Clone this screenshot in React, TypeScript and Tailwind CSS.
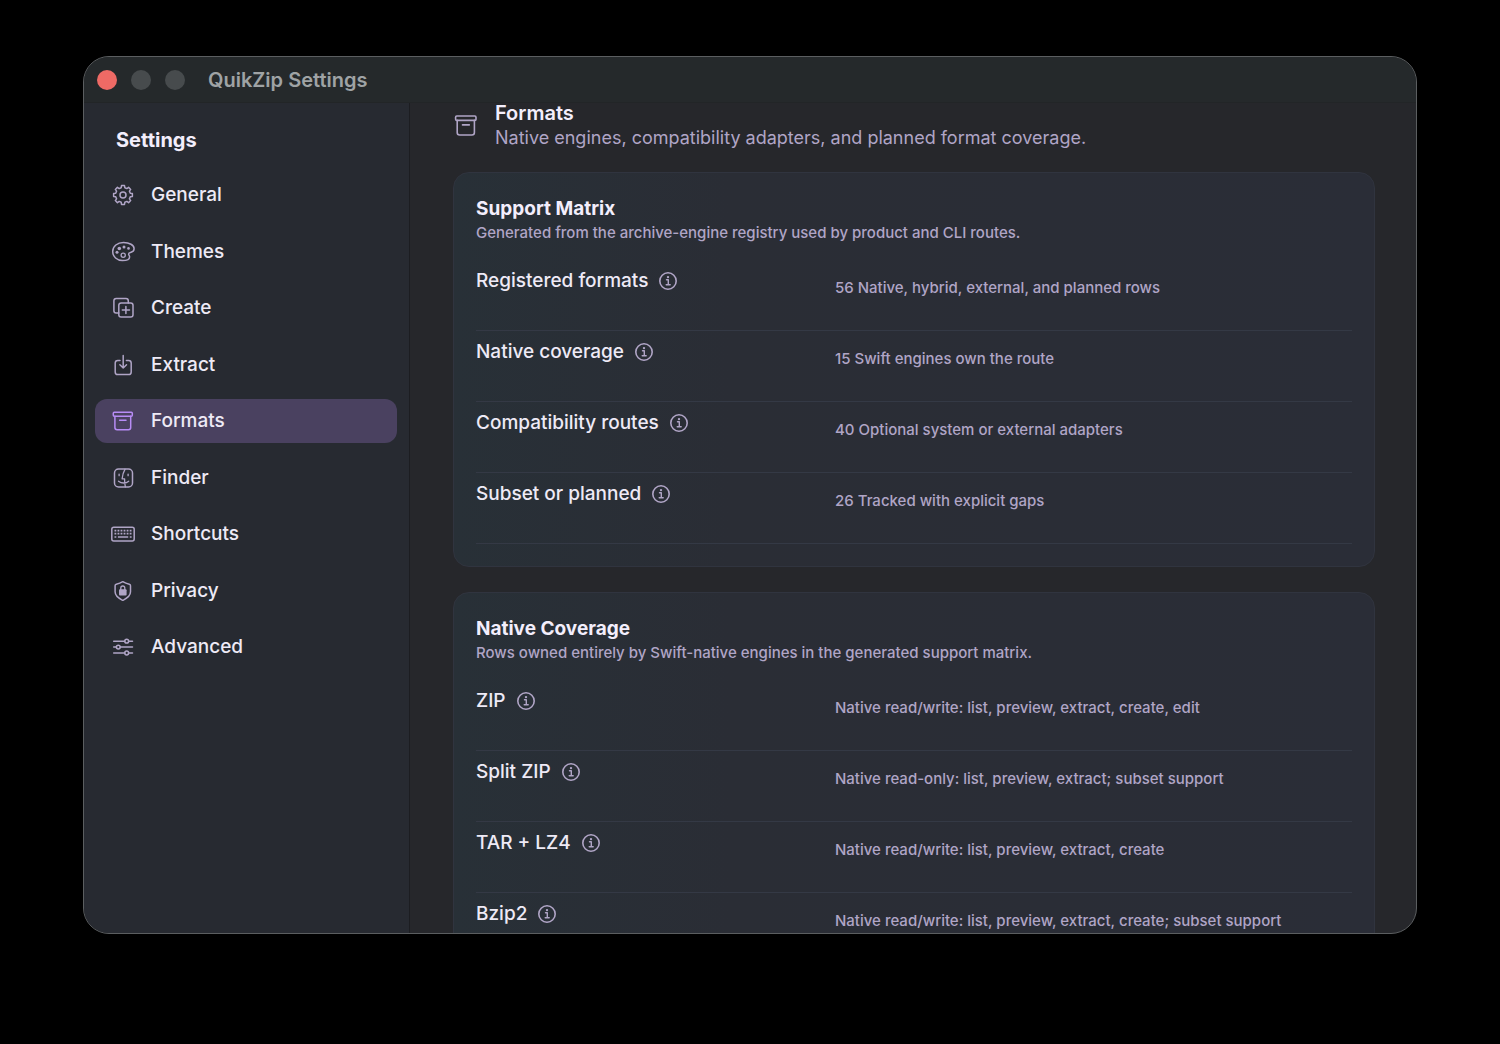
import type { ReactNode } from "react";

type Row = { label: string; value: string };

const supportRows: Row[] = [
  { label: "Registered formats", value: "56 Native, hybrid, external, and planned rows" },
  { label: "Native coverage", value: "15 Swift engines own the route" },
  { label: "Compatibility routes", value: "40 Optional system or external adapters" },
  { label: "Subset or planned", value: "26 Tracked with explicit gaps" },
];

const nativeRows: Row[] = [
  { label: "ZIP", value: "Native read/write: list, preview, extract, create, edit" },
  { label: "Split ZIP", value: "Native read-only: list, preview, extract; subset support" },
  { label: "TAR + LZ4", value: "Native read/write: list, preview, extract, create" },
  { label: "Bzip2", value: "Native read/write: list, preview, extract, create; subset support" },
];

// Eight-tooth cog outline around (12, 12)
function gearPath() {
  const points: string[] = [];
  for (let tooth = 0; tooth < 8; tooth++) {
    const corners = [
      [-14, 7.5],
      [-9, 9.5],
      [9, 9.5],
      [14, 7.5],
    ];
    for (const [offset, radius] of corners) {
      const angle = ((tooth * 45 + offset) * Math.PI) / 180;
      points.push(`${(12 + radius * Math.sin(angle)).toFixed(2)} ${(12 - radius * Math.cos(angle)).toFixed(2)}`);
    }
  }
  return `M${points.join("L")}Z`;
}

function Icon({ children }: { children: ReactNode }) {
  return (
    <svg
      aria-hidden="true"
      viewBox="0 0 24 24"
      className="size-6 shrink-0"
      fill="none"
      stroke="currentColor"
      strokeWidth="1.5"
      strokeLinecap="round"
      strokeLinejoin="round"
    >
      {children}
    </svg>
  );
}

const navItems: { label: string; icon: ReactNode }[] = [
  {
    label: "General",
    icon: (
      <Icon>
        <path d={gearPath()} />
        <circle cx="12" cy="12" r="3" />
      </Icon>
    ),
  },
  {
    label: "Themes",
    icon: (
      <Icon>
        <path d="M12.5 2.5C6.400 2.500 1.700 6.200 1.700 11.500c0 5.200 4.300 9 9.800 9 4.200 0 7.100-1.500 7.100-3.600 0-1.300-1-1.700-1-2.800 0-1.200 1.100-1.500 2.500-1.900 1.700-.5 3-1.500 3-3.500 0-3.600-4.700-6.200-10.600-6.200Z" />
        <circle cx="12.2" cy="15.3" r="2.100" strokeWidth="1.3" />
        <g fill="currentColor" stroke="none">
          <circle cx="6" cy="12.300" r="1.500" />
          <circle cx="8.300" cy="8.500" r="1.800" />
          <circle cx="13" cy="6.900" r="1.500" />
          <circle cx="17.500" cy="8.400" r="1.300" />
        </g>
      </Icon>
    ),
  },
  {
    label: "Create",
    icon: (
      <Icon>
        <path d="M7.800 17H5.200a2.300 2.300 0 0 1-2.300-2.300V4.900a2.300 2.300 0 0 1 2.300-2.300h9.800a2.300 2.300 0 0 1 2.300 2.300v2" />
        <rect x="7.800" y="6.900" width="14.200" height="14.200" rx="2.300" />
        <path d="M14.900 10.400v7.200M11.300 14h7.200" />
      </Icon>
    ),
  },
  {
    label: "Extract",
    icon: (
      <Icon>
        <path d="M9 7.500H6.800a2.600 2.600 0 0 0-2.600 2.600v8.900a2.600 2.600 0 0 0 2.600 2.600h10.800a2.600 2.600 0 0 0 2.600-2.600v-8.900a2.600 2.600 0 0 0-2.600-2.600h-2.200M12.200 2.600v12.300M8.900 11.800l3.300 3.200 3.300-3.200" />
      </Icon>
    ),
  },
  {
    label: "Formats",
    icon: (
      <Icon>
        <rect x="2.300" y="3.300" width="19" height="4" rx="1" />
        <path d="M3.900 7.300v11.200a2.200 2.200 0 0 0 2.200 2.200h11.400a2.200 2.200 0 0 0 2.200-2.200V7.300M8.600 11.200h6.400" />
      </Icon>
    ),
  },
  {
    label: "Finder",
    icon: (
      <Icon>
        <rect x="3.500" y="3" width="18" height="18" rx="4" />
        <path strokeWidth="1.300" d="M14.100 3.200c-1.800 3-2.700 6-3 9.600h2.500c-.1 2.700.1 5.400.8 8M7.500 15.200c3 2.400 7.500 2.400 10.200 0M8.100 8.100v1.600M17.100 8.100v1.600" />
      </Icon>
    ),
  },
  {
    label: "Shortcuts",
    icon: (
      <Icon>
        <rect x="0.800" y="5.200" width="22.400" height="13.800" rx="2" />
        <path
          strokeLinecap="butt"
          strokeWidth="1.800"
          strokeDasharray="1.800 1.240"
          d="M3.500 8.700h17.200M3.500 11.700h17.200"
        />
        <path strokeLinecap="butt" strokeWidth="1.700" d="M3.500 15h1.800M6.900 15h10.300M18.800 15h1.800" />
      </Icon>
    ),
  },
  {
    label: "Privacy",
    icon: (
      <Icon>
        <path d="M11.800 2.700c-2 1.300-4.300 2.100-6.500 2.500-.8.200-1.200.7-1.200 1.500v6.100c0 4.500 3.600 6.500 7.100 8.300q.6.300 1.200 0c3.500-1.800 7.100-3.800 7.100-8.300V6.700c0-.8-.4-1.300-1.200-1.500-2.200-.4-4.500-1.200-6.500-2.500Z" />
        <rect x="8" y="10.300" width="7.600" height="6.200" rx="1" fill="currentColor" stroke="none" />
        <path strokeWidth="1.300" d="M9.800 11V9a2 2 0 0 1 4 0v2" />
      </Icon>
    ),
  },
  {
    label: "Advanced",
    icon: (
      <Icon>
        <path d="M2.700 6.200h11M17.700 6.200h3.800M2.700 12.100h2.600M9.300 12.100h12.200M2.700 18h11M17.700 18h3.800" />
        <circle cx="15.700" cy="6.200" r="1.900" />
        <circle cx="7.300" cy="12.100" r="1.900" />
        <circle cx="15.700" cy="18" r="1.900" />
      </Icon>
    ),
  },
];

function InfoButton({ label }: { label: string }) {
  return (
    <button type="button" aria-label={`About ${label}`} className="text-[#b0a5c6]">
      <svg
        aria-hidden="true"
        viewBox="0 0 20 20"
        className="size-5"
        fill="none"
        stroke="currentColor"
        strokeWidth="1.6"
        strokeLinecap="round"
        strokeLinejoin="round"
      >
        <circle cx="10" cy="10" r="8.200" />
        <path strokeWidth="1.400" d="M8.500 8.800h1.800v4.900M8.200 13.800h4" />
        <circle cx="10" cy="6.100" r="1.200" fill="currentColor" stroke="none" />
      </svg>
    </button>
  );
}

function FormatCard({ title, description, rows }: { title: string; description: string; rows: Row[] }) {
  return (
    <section className="rounded-2xl border border-[#30343f] bg-linear-to-r from-[#283037] via-[#2a2d35] via-30% to-[#2a2d37] px-[22px] pt-6 pb-[22px]">
      <h2 className="text-[19px] leading-6 font-bold text-[#f3eefc]">{title}</h2>
      <p className="text-[15px] leading-6 font-medium text-[#b0a5c6]">{description}</p>
      <dl className="mt-[15px]">
        {rows.map((row) => (
          <div key={row.label} className="grid h-[71px] grid-cols-[359px_1fr] border-b border-[#343945]">
            <dt className="flex items-center gap-[10px] self-start pt-[9px] text-[19px] leading-6 font-medium text-[#eeeaf6]">
              {row.label}
              <InfoButton label={row.label} />
            </dt>
            <dd className="pt-[18px] text-[15px] leading-5 font-medium text-[#b0a5c6]">{row.value}</dd>
          </div>
        ))}
      </dl>
    </section>
  );
}

export default function App() {
  return (
    <div className="h-screen bg-black px-[83px] pt-14 pb-[110px] font-['Inter',sans-serif]">
      <div className="flex h-full flex-col overflow-hidden rounded-[26px] border border-[#5b5e60] bg-[#26272b]">
        {/* Title bar */}
        <header className="flex h-[46px] shrink-0 items-center border-b border-[#222527] bg-[#25292b] pl-[13px]">
          <div className="flex gap-[14px]">
            <button type="button" aria-label="Close" className="size-5 rounded-full bg-[#ee6a65]" />
            <button type="button" aria-label="Minimize" className="size-5 rounded-full bg-[#474b4d]" />
            <button type="button" aria-label="Zoom" className="size-5 rounded-full bg-[#474b4d]" />
          </div>
          <h1 className="ml-[23px] text-[20px] leading-6 font-semibold text-[#9fa3a5]">QuikZip Settings</h1>
        </header>

        <div className="flex min-h-0 flex-1">
          {/* Sidebar */}
          <aside className="w-[326px] shrink-0 border-r border-[#1c1d21] bg-[#272a31] pr-3 pl-[11px]">
            <h2 className="mt-[25px] ml-[21px] text-[20px] leading-6 font-bold text-[#f3eefc]">Settings</h2>
            <nav className="mt-[21px] flex h-[496px] flex-col justify-between">
              {navItems.map((item) => {
                const active = item.label === "Formats";
                return (
                  <button
                    key={item.label}
                    type="button"
                    aria-current={active ? "page" : undefined}
                    className={
                      active
                        ? "flex h-11 items-center gap-4 rounded-xl bg-[#4a4160] pl-4 text-[#b78cf5]"
                        : "flex h-11 items-center gap-4 rounded-xl pl-4 text-[#b0a5c6]"
                    }
                  >
                    {item.icon}
                    <span className="text-[19px] leading-6 font-medium text-[#eeeaf6]">{item.label}</span>
                  </button>
                );
              })}
            </nav>
          </aside>

          {/* Formats pane, runs past the bottom edge of the window */}
          <main className="min-w-0 flex-1 pr-[41px] pl-[43px]">
            <div className="flex items-center gap-[18px] text-[#b0a5c6]">
              <svg
                aria-hidden="true"
                viewBox="0 0 24 24"
                className="size-6 shrink-0"
                fill="none"
                stroke="currentColor"
                strokeWidth="1.6"
                strokeLinecap="round"
                strokeLinejoin="round"
              >
                <rect x="2.600" y="2" width="20.400" height="4.400" rx="1.200" />
                <path d="M4.200 6.400v12.200a2.400 2.400 0 0 0 2.400 2.400h12.400a2.400 2.400 0 0 0 2.400-2.400V6.400M9.500 10.900h6.800" />
              </svg>
              <div>
                <h2 className="text-[20px] leading-5 font-semibold text-[#f3eefc]">Formats</h2>
                <p className="mt-[5px] text-[18px] leading-5 text-[#b0a5c6]">
                  Native engines, compatibility adapters, and planned format coverage.
                </p>
              </div>
            </div>
            <div className="mt-6 flex flex-col gap-[25px]">
              <FormatCard
                title="Support Matrix"
                description="Generated from the archive-engine registry used by product and CLI routes."
                rows={supportRows}
              />
              <FormatCard
                title="Native Coverage"
                description="Rows owned entirely by Swift-native engines in the generated support matrix."
                rows={nativeRows}
              />
            </div>
          </main>
        </div>
      </div>
    </div>
  );
}
